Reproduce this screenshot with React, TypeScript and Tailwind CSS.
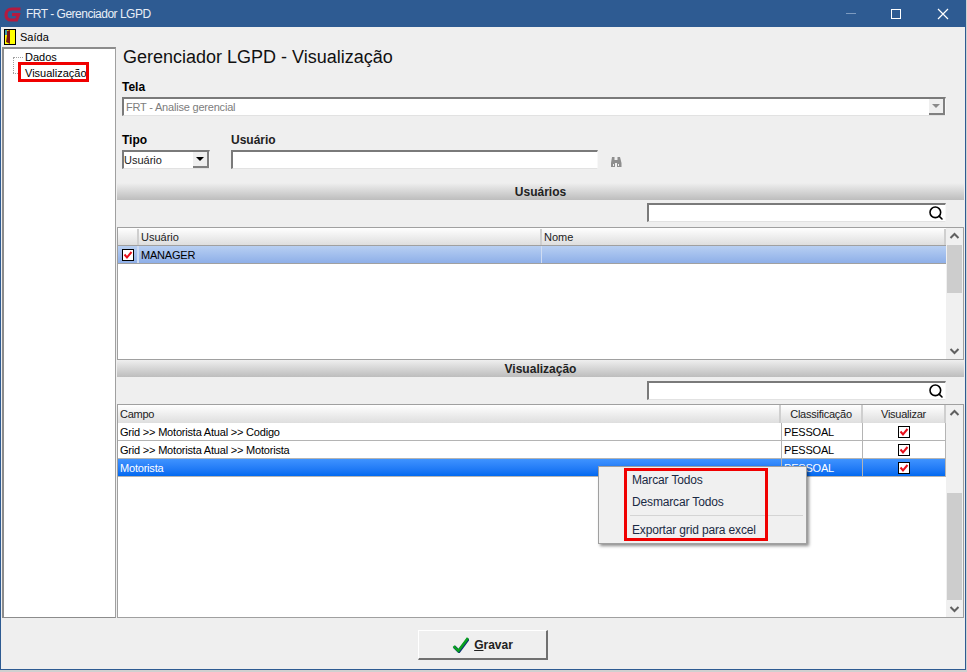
import { Search } from "lucide-react";

const font = "font-['Liberation_Sans','Noto_Sans',sans-serif]";

function Check() {
  return (
    <span className="flex h-[12px] w-[12px] items-center justify-center border border-black bg-white">
      <svg width="10" height="10" viewBox="0 0 10 10">
        <path d="M1.5 4.5 L4 7.5 L8.5 2" fill="none" stroke="#e8101c" strokeWidth="2" />
      </svg>
    </span>
  );
}

function Sunken({ className, children }: { className: string; children?: React.ReactNode }) {
  return (
    <div className={`border-t-2 border-l-2 border-r border-b border-t-[#7a7a7a] border-l-[#7a7a7a] border-r-[#f8f8f8] border-b-[#e2e2e2] bg-white ${className}`}>
      {children}
    </div>
  );
}

function SectionBar({ title }: { title: string }) {
  return (
    <div className="flex h-[17px] items-center justify-center bg-gradient-to-b from-[#efefef] to-[#bdbdbd] text-[12px] font-bold text-[#222]">
      {title}
    </div>
  );
}

function SearchBox() {
  return (
    <div className="flex justify-end pr-[18px]">
      <Sunken className="flex h-[19px] w-[299px] items-center justify-end pr-[1px]">
        <Search size={16} strokeWidth={2.4} className="text-black" />
      </Sunken>
    </div>
  );
}

function ScrollBar({ topGap, thumb }: { topGap: number; thumb: number }) {
  return (
    <div className="flex w-[17px] shrink-0 flex-col items-center bg-[#f0f0f0]">
      <svg width="17" height="17" viewBox="0 0 17 17" className="shrink-0">
        <path d="M4.5 10 L8.5 6 L12.5 10" fill="none" stroke="#606060" strokeWidth="2" />
      </svg>
      <div className="w-[15px] shrink-0" style={{ height: topGap }} />
      <div className="w-[15px] shrink-0 bg-[#cdcdcd]" style={{ height: thumb }} />
      <div className="flex-1" />
      <svg width="17" height="17" viewBox="0 0 17 17" className="shrink-0">
        <path d="M4.5 7 L8.5 11 L12.5 7" fill="none" stroke="#606060" strokeWidth="2" />
      </svg>
    </div>
  );
}

function HeaderCell({ className, children }: { className: string; children?: React.ReactNode }) {
  return (
    <div className={`flex h-full items-center border-r-2 border-[#cfcfcf] pl-[2px] ${className}`}>
      {children}
    </div>
  );
}

const rows = ["Grid >> Motorista Atual >> Codigo", "Grid >> Motorista Atual >> Motorista", "Motorista"];

export default function App() {
  return (
    <div className={`${font} h-[672px] w-[967px] overflow-hidden bg-[#d0d0d0] text-[12px] text-black`}>
      <div className="flex h-[670px] w-[966px] flex-col border border-t-0 border-[#2e5b92] bg-[#efefef]">
        {/* title bar */}
        <div className="flex h-[27px] shrink-0 items-center bg-[#2e5b92] text-white">
          <svg width="18" height="18" viewBox="0 0 18 18" className="ml-[3px] shrink-0">
            <path d="M16.500 4 L8 4 C4 4 2 7 2 10 C2 13 4 15 7 15 L12.500 15 L14.500 9.500 L8 9.500" fill="none" stroke="#b31b3f" strokeWidth="3.200" />
          </svg>
          <span className="ml-[4px] text-[12px] tracking-[-0.5px] text-[#e8eef6]">FRT - Gerenciador LGPD</span>
          <div className="ml-auto flex items-center">
            <div className="h-px w-[10px] bg-[#7d9bc0]" />
            <div className="ml-[35px] h-[10px] w-[10px] border border-white" />
            <svg width="12" height="12" viewBox="0 0 12 12" className="ml-[36px] mr-[16px]">
              <path d="M1 1 L11 11 M11 1 L1 11" stroke="white" strokeWidth="1.2" />
            </svg>
          </div>
        </div>

        {/* menu */}
        <div className="flex h-[20px] shrink-0 items-center gap-[4px] pl-[3px]">
          <svg width="12" height="16" viewBox="0 0 12 16">
            <rect x="0" y="0" width="12" height="16" fill="#000" />
            <rect x="1" y="1" width="10" height="14" fill="#ffff00" />
            <rect x="1" y="1" width="2" height="5" fill="#3fa0a8" />
            <path d="M3 2 L6 1 L6 15 L2 13 L3 6 Z" fill="#7a1414" />
          </svg>
          <span className="text-[11px]">Saída</span>
        </div>

        <div className="flex min-h-0 flex-1">
          {/* tree */}
          <div className="ml-[1px] h-[571px] w-[114px] shrink-0 border-2 border-r border-b border-[#8c8c8c] border-r-[#a0a0a0] bg-white">
            <div className="relative pl-[21px] text-[11px] leading-[16px]">
              <div className="h-[16px]">Dados</div>
              <div className="h-[16px]">Visualização</div>
              <div className="absolute left-[9px] top-[8px] h-[16px] w-[10px] border-l border-t border-dotted border-[#a0a0a0]" />
              <div className="absolute left-[9px] top-[24px] h-px w-[5px] border-t border-dotted border-[#a0a0a0]" />
              <div className="absolute left-[14px] top-[13px] h-[20px] w-[71px] border-[3px] border-[#f00000]" />
            </div>
          </div>

          {/* content */}
          <div className="ml-[1px] flex min-w-0 flex-1 flex-col pr-[1px]">
            <div className="flex-1">
              <div className="pl-[5px]">
                <h1 className="pl-[1px] text-[18px] leading-[21px] text-[#111]">Gerenciador LGPD - Visualização</h1>
                <div className="mt-[12px] text-[12px] font-bold leading-[14px]">Tela</div>
                <Sunken className="mt-[3px] flex h-[19px] w-[824px] items-center justify-between text-[11px] tracking-[-0.2px] text-[#7d7d7d]">
                  <span className="pl-[2px]">FRT - Analise gerencial</span>
                  <div className="flex h-[16px] w-[16px] items-center justify-center border-r-2 border-b-2 border-[#808080] bg-[#efefef]">
                    <div className="h-0 w-0 border-x-[4px] border-t-[4px] border-x-transparent border-t-[#8a8a8a]" />
                  </div>
                </Sunken>
                <div className="mt-[17px] flex">
                  <div className="w-[109px]">
                    <div className="text-[12px] font-bold leading-[14px]">Tipo</div>
                    <Sunken className="mt-[3px] flex h-[19px] w-[88px] items-center justify-between text-[11px] text-[#222]">
                      <span>Usuário</span>
                      <div className="flex h-[16px] w-[16px] items-center justify-center border-r-2 border-b-2 border-[#808080] bg-[#efefef]">
                        <div className="h-0 w-0 border-x-[4px] border-t-[4px] border-x-transparent border-t-black" />
                      </div>
                    </Sunken>
                  </div>
                  <div>
                    <div className="text-[12px] font-bold leading-[14px] text-[#222]">Usuário</div>
                    <div className="mt-[3px] flex items-center">
                      <Sunken className="h-[19px] w-[367px]" />
                      <svg width="12" height="12" viewBox="0 0 12 12" className="ml-[12px] mt-[5px]">
                        <path d="M2 1h2.5v3h3V1H10l1.500 6v4H7V7H5v4H1V7Z" fill="#8e8e8e" />
                        <path d="M3 8h1v2H3Zm5 0h1v2H8Z" fill="#efefef" />
                      </svg>
                    </div>
                  </div>
                </div>
              </div>

              <div className="mt-[14px]">
                <SectionBar title="Usuários" />
              </div>
              <div className="mt-[3px]">
                <SearchBox />
              </div>

              {/* users grid */}
              <div className="mt-[5px] flex h-[133px] border border-[#a0a0a0] bg-white">
                <div className="min-w-0 flex-1">
                  <div className="flex h-[17px] bg-gradient-to-b from-white to-[#dedede] pt-px text-[11px] text-[#222]">
                    <HeaderCell className="w-[21px]" />
                    <HeaderCell className="w-[403px]">Usuário</HeaderCell>
                    <HeaderCell className="flex-1">Nome</HeaderCell>
                  </div>
                  <div className="flex h-[19px] border-y border-y-[#a0a0a0] bg-gradient-to-b from-[#b8cff2] to-[#8eafe8] text-[11px]">
                    <div className="flex w-[21px] items-center justify-center border-r-2 border-[#cfdcf2]">
                      <Check />
                    </div>
                    <div className="flex w-[403px] items-center border-r border-[#cfdcf2] pl-[2px] pt-px tracking-[-0.2px]">MANAGER</div>
                  </div>
                </div>
                <ScrollBar topGap={0} thumb={48} />
              </div>

              <SectionBar title="Visualização" />
              <div className="mt-[4px]">
                <SearchBox />
              </div>

              {/* fields grid */}
              <div className="relative mt-[4px] flex h-[214px] border border-[#a0a0a0] bg-white">
                <div className="min-w-0 flex-1">
                  <div className="flex h-[18px] bg-gradient-to-b from-white to-[#dedede] text-[11px] tracking-[-0.25px] text-[#222]">
                    <HeaderCell className="flex-1">Campo</HeaderCell>
                    <HeaderCell className="w-[82px] justify-center !pl-0">Classificação</HeaderCell>
                    <HeaderCell className="w-[83px] justify-center !pl-0">Visualizar</HeaderCell>
                  </div>
                  {rows.map((r, i) => {
                    const sel = i === 2;
                    return (
                      <div
                        key={r}
                        className={`flex h-[18px] border-b border-[#b4b4b4] text-[11px] tracking-[-0.2px] ${sel ? "bg-gradient-to-b from-[#3f93ff] to-[#0069f0] text-white" : "text-black"}`}
                      >
                        <div className="flex min-w-0 flex-1 items-center pl-[2px] pt-px">{r}</div>
                        <div className="flex w-[82px] items-center border-x border-[#b4b4b4] pl-[2px] pt-px">PESSOAL</div>
                        <div className="flex w-[83px] items-center justify-center border-r border-[#b4b4b4]">
                          <Check />
                        </div>
                      </div>
                    );
                  })}
                </div>
                <ScrollBar topGap={71} thumb={107} />

                {/* context menu */}
                <div className="absolute left-[480px] top-[61px] h-[78px] w-[209px] border border-[#a0a0a0] bg-[#f0f0f0] pt-[2px] text-[12px] tracking-[-0.15px] text-[#1a2a44] shadow-[2px_2px_3px_rgba(0,0,0,0.45)]">
                  <div className="flex h-[22px] items-center pl-[33px]">Marcar Todos</div>
                  <div className="flex h-[22px] items-center pl-[33px]">Desmarcar Todos</div>
                  <div className="ml-[31px] mr-[3px] mt-[2px] mb-[3px] h-px bg-[#d4d4d4]" />
                  <div className="flex h-[21px] items-center pl-[33px]">Exportar grid para excel</div>
                  <div className="pointer-events-none absolute left-[25px] top-[1px] h-[73px] w-[144px] border-[3px] border-[#f00000]" />
                </div>
              </div>
            </div>

            {/* footer */}
            <div className="flex h-[51px] shrink-0 items-start justify-center pt-[12px] pr-[115px]">
              <button className="flex h-[30px] w-[130px] items-center justify-center gap-[5px] border border-r-2 border-b-2 border-white border-r-[#707070] border-b-[#707070] text-[12px] font-bold text-[#222]">
                <svg width="17" height="17" viewBox="0 0 16 16">
                  <path d="M1.500 9.500 L6 14 L15 2" fill="none" stroke="#0a2a78" strokeWidth="3" transform="translate(0.500 0.500)" />
                  <path d="M1.500 9.500 L6 14 L15 2" fill="none" stroke="#0aa020" strokeWidth="2.400" />
                </svg>
                <span className="pt-px"><span className="underline">G</span>ravar</span>
              </button>
            </div>
          </div>
        </div>
      </div>
    </div>
  );
}
